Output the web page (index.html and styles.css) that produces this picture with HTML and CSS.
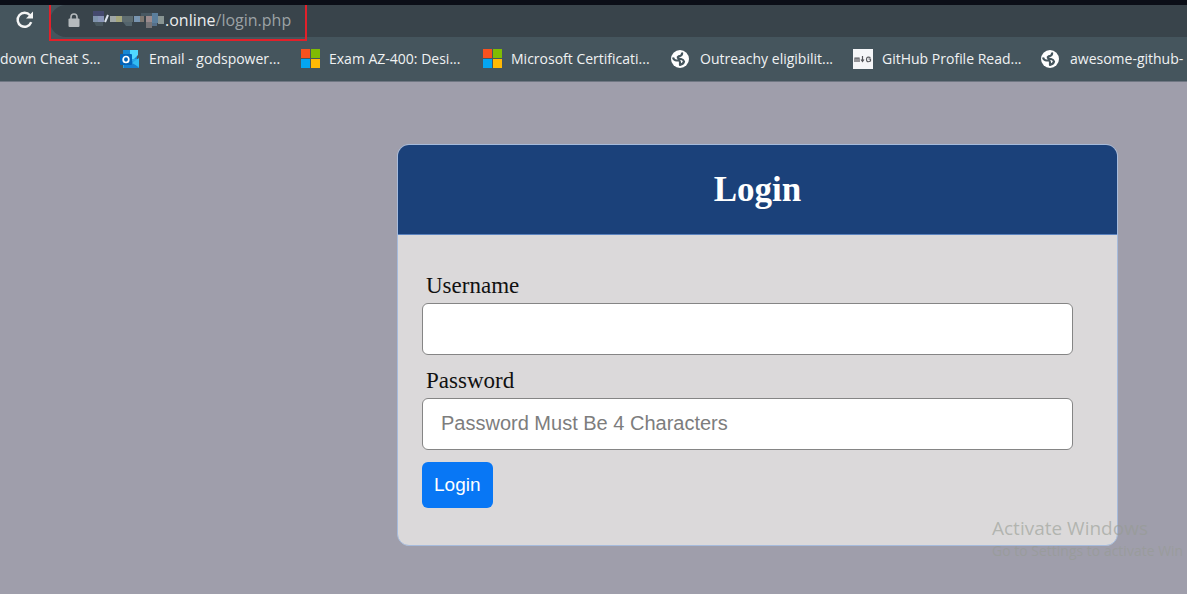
FILE: index.html
```html
<!DOCTYPE html>
<html lang="en">
<head>
<meta charset="utf-8">
<title>Login</title>
<link rel="stylesheet" href="styles.css">
</head>
<body>
<svg class="defs" aria-hidden="true">
  <symbol id="ms" viewBox="0 0 20 20">
    <path fill="#f8511f" d="M1 0h9v9H1z"/><path fill="#80bb03" d="M11 0h9v9h-9z"/>
    <path fill="#04a5f0" d="M1 10h9v9H1z"/><path fill="#ffb904" d="M11 10h9v9h-9z"/>
  </symbol>
  <symbol id="globe" viewBox="0 0 20 20">
    <circle cx="9" cy="10" r="9" fill="#fff"/>
    <path d="M2 8.500Q3 11.500 5.500 11.500H8Q9 12 9 13.500V16Q12.500 15 13 12.500Q12.500 10.500 10 10Q6.500 10 6.800 8Q7.500 6.800 9.500 6.800Q11.500 6 11 3.500" fill="none" stroke="#45555d" stroke-width="2.200" stroke-linejoin="round"/>
  </symbol>
</svg>
<header class="browser">
  <div class="toolbar">
    <button class="reload" aria-label="Reload">
      <svg width="20" height="20" viewBox="0 0 20 20"><path d="M16.200 12.200A7 7 0 1 1 15 5.300" fill="none" stroke="#f4f5f5" stroke-width="2.400"/><path d="M18 1.500v7h-7z" fill="#f4f5f5"/></svg>
    </button>
    <div class="omnibox">
      <svg class="lock" width="12" height="15" viewBox="0 0 12 15"><path d="M3 6V4a3 3 0 0 1 6 0v2" fill="none" stroke="#b5babd" stroke-width="1.600"/><rect x="0.500" y="5.500" width="11" height="8.500" rx="1" fill="#b5babd"/></svg>
      <svg class="mosaic" width="73" height="18" viewBox="0 0 73 18">
        <path fill="#44496e" d="M1 0h11v5H1z"/><path fill="#49585f" d="M2 11h9v4H4z"/>
        <path fill="#7f93ac" d="M1 5h5v6H1z"/><path fill="#8995b8" d="M6 5h6v6H6z"/>
        <path d="M13 11l3-7" fill="none" stroke="#dce4ee" stroke-width="2"/>
        <path fill="#9fa6a6" d="M18 5h6v6h-6z"/><path fill="#a5a77d" d="M24 5h6v6h-6z"/>
        <path fill="#5e6c70" d="M30 5h11v6H30z"/><path fill="#53646c" d="M31 11h9v4h-6z"/>
        <path fill="#7995b0" d="M42 5h6v6h-6z"/><path fill="#7e7770" d="M48 5h4v6h-4z"/>
        <path fill="#485862" d="M49 2h12v3H49z"/><path fill="#9c8b8d" d="M54 5h6v6h-6z"/>
        <path fill="#767477" d="M54 11h6v6h-6z"/><path fill="#5b7e9c" d="M60 2h6v10h-6z"/>
        <path fill="#56708a" d="M60 12h5v3h-5z"/><path fill="#899593" d="M66 5h6v8h-6z"/>
      </svg>
      <span class="domain">.online</span><span class="path">/login.php</span>
      <span class="marker"></span>
    </div>
  </div>
  <nav class="bookmarks" aria-label="Bookmarks">
    <a href="#">down Cheat S...</a>
    <a href="#"><svg viewBox="0 0 20 20"><path fill="#1687d4" d="M3 1h14v9H3z"/><path fill="#50d9ff" d="M10 1h8v5l-4 4h-4z"/><path fill="#28a8ea" d="M3 10h16v9H3z"/><path fill="#1580d2" d="M4 12h8l7 7H4z"/><path fill="#32bcf2" d="M19 9v9l-7-4z"/><rect y="5" width="12" height="11" rx="1" fill="#0364b8"/><ellipse cx="6" cy="10.500" rx="2.800" ry="3" fill="none" stroke="#fff" stroke-width="1.700"/></svg>Email - godspower...</a>
    <a href="#"><svg><use href="#ms"/></svg>Exam AZ-400: Desi...</a>
    <a href="#"><svg><use href="#ms"/></svg>Microsoft Certificati...</a>
    <a href="#"><svg><use href="#globe"/></svg>Outreachy eligibilit...</a>
    <a href="#"><svg viewBox="0 0 20 20"><path fill="#f5f6f8" d="M0 0h20v20H0z"/><path d="M2 13V9h4v4M4 9v4M9.500 7v5M8 10.500l1.500 2 1.500-2M17.500 8.500q-4-1.500-4 2t4 1.500v-2h-2" fill="none" stroke="#55565b" stroke-width="1.200"/></svg>GitHub Profile Read...</a>
    <a href="#"><svg><use href="#globe"/></svg>awesome-github-</a>
  </nav>
</header>
<main class="page">
  <section class="card">
    <h1 class="title">Login</h1>
    <form class="form">
      <label class="label" for="username">Username</label>
      <input class="field" id="username" type="text">
      <label class="label" for="password">Password</label>
      <input class="field" id="password" type="password" placeholder="Password Must Be 4 Characters">
      <button class="submit" type="button">Login</button>
    </form>
  </section>
</main>
<aside class="watermark">
  <p class="watermark-title">Activate Windows</p>
  <p class="watermark-note">Go to Settings to activate Win</p>
</aside>
</body>
</html>
```
FILE: styles.css
```css
* { box-sizing: border-box; }
body {
  margin: 0;
  min-height: 100vh;
  display: flex;
  flex-direction: column;
  position: relative;
  overflow: hidden;
  background: #9f9eab;
  font-family: "Liberation Serif", serif;
}
.defs { position: absolute; width: 0; height: 0; }
.browser {
  border-top: 5px solid #0b0e17;
  border-bottom: 1px solid #707783;
  background: #45555d;
  font-family: "Open Sans", "Noto Sans", sans-serif;
}
.toolbar { display: flex; height: 32px; }
.reload {
  width: 50px;
  padding: 0 0 2px;
  border: 0;
  background: none;
  display: flex;
  align-items: center;
  justify-content: center;
}
.omnibox {
  position: relative;
  flex: 1;
  display: flex;
  align-items: center;
  padding: 0 0 2px 18px;
  border-radius: 16px 0 0 16px;
  background: #39444b;
  font-size: 16px;
}
.mosaic { margin-left: 12px; }
.domain { color: #eceeef; }
.path { color: #9ca2a5; }
.marker {
  position: absolute;
  left: -1px;
  top: 0;
  width: 258px;
  height: 36px;
  border: 2px solid #e2202a;
  border-top: 0;
}
.bookmarks {
  display: grid;
  grid-template-columns: 120px 180px 182px 189px 182px 188px 1fr;
  align-items: center;
  height: 44px;
  padding-bottom: 1px;
  font-size: 14px;
}
.bookmarks a {
  display: flex;
  align-items: center;
  gap: 9px;
  min-width: 0;
  color: #f0f2f3;
  text-decoration: none;
  white-space: nowrap;
}
.bookmarks svg { flex: none; width: 20px; height: 20px; }
.page {
  flex: 1;
  display: flex;
  justify-content: flex-end;
  align-items: flex-start;
  padding: 62px 69px 49px;
}
.card {
  width: 100%;
  max-width: 721px;
  border: 1px solid #a6bbdc;
  border-radius: 12px;
  overflow: hidden;
  background: #dbd9da;
}
.title {
  margin: 0;
  padding: 25px 25px 24px;
  border-bottom: 1px solid #5b82bd;
  background: #1b417a;
  color: #fff;
  font-size: 35px;
  line-height: 40px;
  text-align: center;
}
.form {
  display: flex;
  flex-direction: column;
  align-items: flex-start;
  padding: 37px 44px 37px 24px;
}
.label {
  margin-left: 4px;
  padding-bottom: 3px;
  color: #111;
  font-size: 23px;
  line-height: 28px;
}
.field {
  width: 100%;
  height: 52px;
  margin-bottom: 12px;
  padding: 0 18px 2px;
  border: 1px solid #858585;
  border-radius: 6px;
  background: #fff;
  font-family: "Liberation Sans", sans-serif;
  font-size: 20px;
}
.field::placeholder { color: #7d7d7d; }
.submit {
  padding: 12px;
  border: 0;
  border-radius: 6px;
  background: #0877f5;
  color: #fff;
  font-family: "Liberation Sans", sans-serif;
  font-size: 19px;
  line-height: 22px;
}
.watermark {
  position: absolute;
  right: 0;
  bottom: 34px;
  width: 195px;
  pointer-events: none;
  color: rgba(150, 155, 146, 0.6);
  font-family: "Open Sans", "Noto Sans", sans-serif;
  white-space: nowrap;
}
.watermark p { margin: 0; }
.watermark-title { font-size: 19px; line-height: 26px; }
.watermark-note { font-size: 14px; line-height: 20px; }
```
